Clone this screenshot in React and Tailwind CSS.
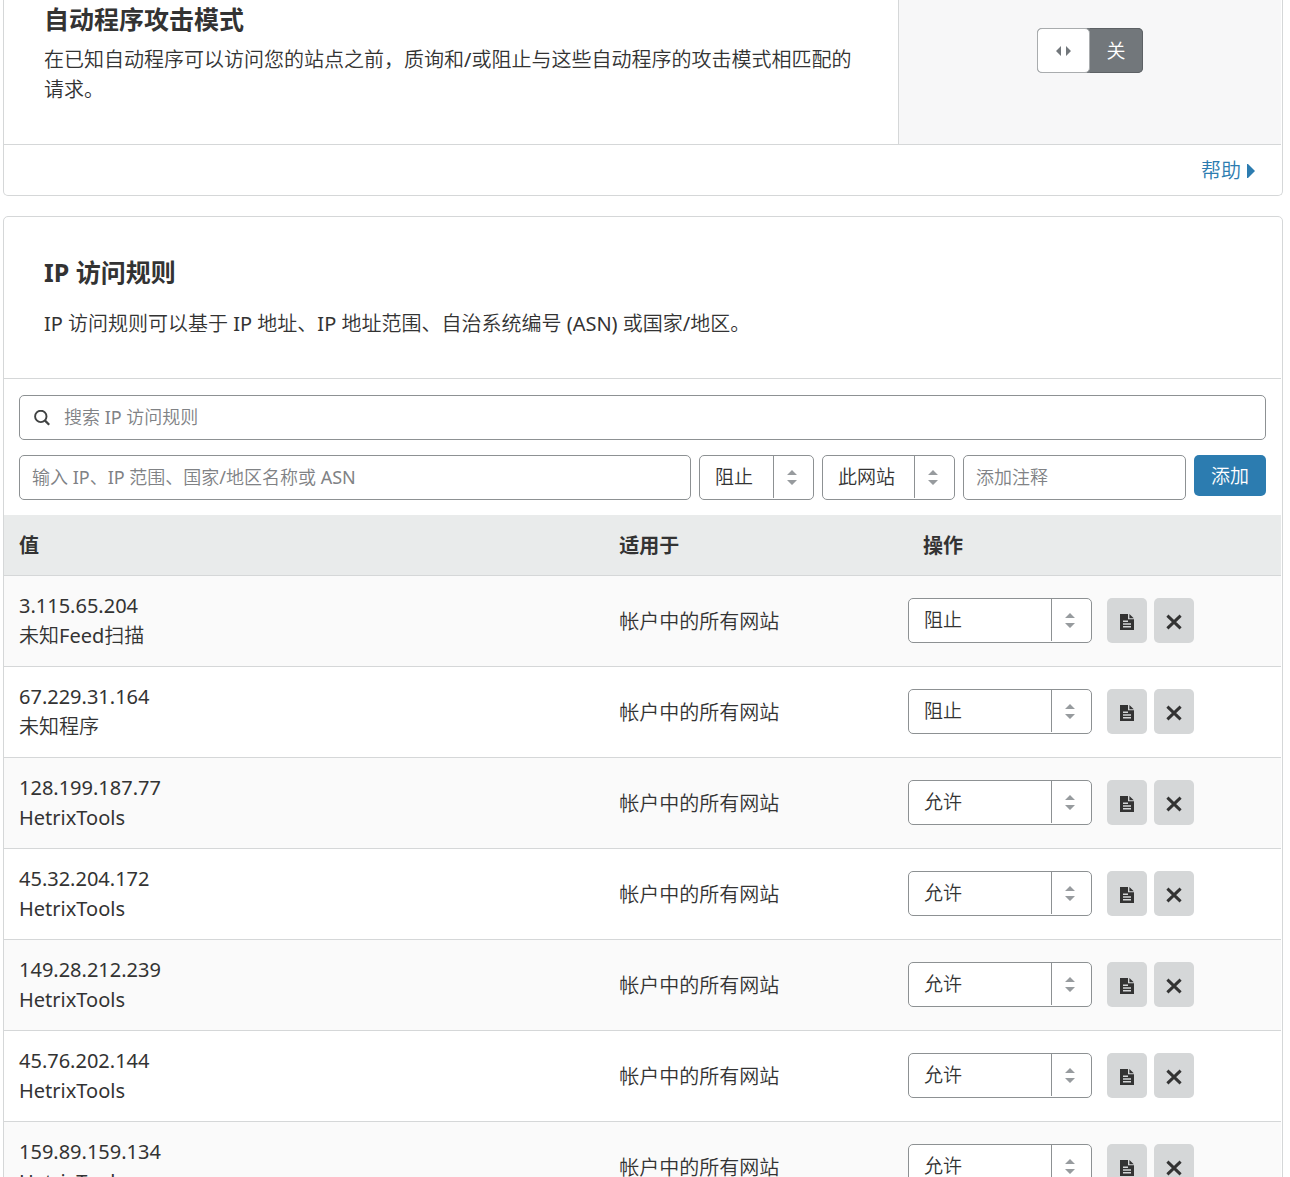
import { useState } from 'react';

const actions = ['阻止', '允许', '质询', 'JavaScript 质询'];
const scopes = ['此网站', '所有网站'];

const initialRules = [
  { ip: '3.115.65.204', note: '未知Feed扫描', action: '阻止' },
  { ip: '67.229.31.164', note: '未知程序', action: '阻止' },
  { ip: '128.199.187.77', note: 'HetrixTools', action: '允许' },
  { ip: '45.32.204.172', note: 'HetrixTools', action: '允许' },
  { ip: '149.28.212.239', note: 'HetrixTools', action: '允许' },
  { ip: '45.76.202.144', note: 'HetrixTools', action: '允许' },
  { ip: '159.89.159.134', note: 'HetrixTools', action: '允许' },
];

function SearchIcon() {
  return (
    <svg className="ml-[14px] h-4 w-4 shrink-0" viewBox="0 0 16 16" fill="none" stroke="#404242" strokeWidth="1.9" aria-hidden="true">
      <circle cx="6.8" cy="6.4" r="5.7" />
      <path d="M10.8 10.4 15.2 14.8" strokeWidth="2.2" />
    </svg>
  );
}

function NoteIcon() {
  return (
    <svg className="h-4 w-[14px]" viewBox="0 0 14 16" aria-hidden="true">
      <path fill="#333" fillRule="evenodd" d="M0 0h8v5.2h6V16H0zM3 6.4v1.5h5V6.4zM3 9.2v1.5h8V9.2zM3 12v1.5h8V12z" />
      <path fill="#333" d="M9.4 0 13.8 4.2H9.4z" />
    </svg>
  );
}

function CloseIcon() {
  return (
    <svg className="h-4 w-4" viewBox="0 0 16 16" stroke="#333" strokeWidth="3" aria-hidden="true">
      <path d="M1.4 1.6 14.6 14.4M14.6 1.6 1.4 14.4" />
    </svg>
  );
}

function Select({ label, options, className, ...props }) {
  return (
    <div className={`relative h-[45px] ${className}`}>
      <select
        aria-label={label}
        className="h-full w-full appearance-none rounded-[5px] border border-[#8d9193] bg-white pr-10 pl-[15px] text-[19px]"
        {...props}
      >
        {options.map((option) => (
          <option key={option}>{option}</option>
        ))}
      </select>
      <span className="pointer-events-none absolute top-px right-0 bottom-[2px] flex w-[41px] items-center justify-center border-l border-[#8d9193] pr-1">
        <svg className="h-[15px] w-[10px]" viewBox="0 0 10 15" fill="#979b9e" aria-hidden="true">
          <path d="M5 0 10 5H0zM5 15 0 10h10z" />
        </svg>
      </span>
    </div>
  );
}

function BotFightCard() {
  const [on, setOn] = useState(false);

  return (
    <section className="rounded-b-[5px] border border-t-0 border-[#d5d7d8] pr-px">
      <div className="flex border-b border-[#d5d7d8]">
        <div className="flex-1 px-10 pt-[3px] pb-[39px]">
          <h2 className="mb-[10px] font-['Noto_Sans','Noto_Sans_CJK_SC',sans-serif] text-[25px] leading-8 font-bold">
            自动程序攻击模式
          </h2>
          <p className="leading-[30px]">
            在已知自动程序可以访问您的站点之前，质询和/或阻止与这些自动程序的攻击模式相匹配的请求。
          </p>
        </div>
        <div className="flex w-[30%] items-start justify-center border-l border-[#d5d7d8] bg-[#f7f7f8] pt-7">
          <button
            type="button"
            role="switch"
            aria-checked={on}
            aria-label="自动程序攻击模式"
            onClick={() => setOn(!on)}
            className="flex h-[45px] w-[106px] rounded-[5px] bg-[#72777b] text-[19px] text-white"
          >
            <span className="flex h-full w-[53px] items-center justify-center rounded-[5px] border border-[#a9acae] bg-white">
              <svg className="h-[10px] w-[15px]" viewBox="0 0 15 10" fill="#72777b" aria-hidden="true">
                <path d="M0 5 5 0v10zM15 5 10 0v10z" />
              </svg>
            </span>
            <span className="flex h-full flex-1 items-center justify-center rounded-r-[5px] border border-l-0 border-[#5d6165] pt-[2px]">
              {on ? '开' : '关'}
            </span>
          </button>
        </div>
      </div>
      <div className="flex h-[50px] items-center justify-end pt-[2px] pr-[26px]">
        <a href="#help" className="flex items-center gap-[6px] text-[#2c7cb0]">
          帮助
          <svg className="h-[14px] w-2" viewBox="0 0 8 14" fill="#2c7cb0" aria-hidden="true">
            <path d="M0 0h1L8 7 1 14H0z" />
          </svg>
        </a>
      </div>
    </section>
  );
}

function AccessRulesCard() {
  const [rules, setRules] = useState(initialRules);

  const changeAction = (ip, action) => {
    setRules(rules.map((rule) => (rule.ip === ip ? { ...rule, action } : rule)));
  };

  const removeRule = (ip) => {
    setRules(rules.filter((rule) => rule.ip !== ip));
  };

  return (
    <section className="rounded-[5px] border border-[#d5d7d8] pr-px">
      <div className="border-b border-[#d5d7d8] px-10 py-[39px]">
        <h2 className="mb-[21px] font-['Noto_Sans','Noto_Sans_CJK_SC',sans-serif] text-[25px] leading-8 font-bold">
          IP 访问规则
        </h2>
        <p className="leading-[30px]">IP 访问规则可以基于 IP 地址、IP 地址范围、自治系统编号 (ASN) 或国家/地区。</p>
      </div>

      <div className="flex flex-col gap-[15px] px-[15px] pt-4 pb-[15px]">
        <label className="flex h-[45px] items-center rounded-[5px] border border-[#8d9193]">
          <SearchIcon />
          <input
            type="search"
            aria-label="搜索 IP 访问规则"
            placeholder="搜索 IP 访问规则"
            className="h-full flex-1 bg-transparent px-[14px] pb-[2px] text-[18px] outline-none placeholder:text-[#808285]"
          />
        </label>
        <form className="flex items-start gap-2" onSubmit={(e) => e.preventDefault()}>
          <input
            type="text"
            aria-label="IP、IP 范围、国家/地区名称或 ASN"
            placeholder="输入 IP、IP 范围、国家/地区名称或 ASN"
            className="h-[45px] min-w-0 flex-1 rounded-[5px] border border-[#8d9193] px-3 pb-[2px] text-[18px] placeholder:text-[#808285]"
          />
          <Select label="操作" options={actions.slice(0, 3)} className="w-[115px]" />
          <Select label="适用于" options={scopes} className="w-[133px]" />
          <input
            type="text"
            aria-label="添加注释"
            placeholder="添加注释"
            className="h-[45px] w-[223px] rounded-[5px] border border-[#8d9193] px-3 pb-[2px] text-[18px] placeholder:text-[#808285]"
          />
          <button type="submit" className="h-[41px] w-[72px] rounded-[5px] bg-[#2c7cb0] pt-[2px] text-[19px] text-white">
            添加
          </button>
        </form>
      </div>

      <table className="w-full table-fixed text-left">
        <thead className="font-['Noto_Sans','Noto_Sans_CJK_SC',sans-serif]">
          <tr className="h-[60px] border-b border-[#d5d7d8] bg-[#e9ebeb]">
            <th className="w-[47%] px-[15px] pt-[2px] font-bold">值</th>
            <th className="px-[15px] pt-[2px] font-bold">适用于</th>
            <th className="w-[373px] px-[15px] pt-[2px] font-bold">操作</th>
          </tr>
        </thead>
        <tbody>
          {rules.map((rule) => (
            <tr key={rule.ip} className="h-[91px] border-b border-[#d5d7d8] odd:bg-[#fafafa]">
              <td className="px-[15px] leading-[30px]">
                <div>{rule.ip}</div>
                <div>{rule.note}</div>
              </td>
              <td className="px-[15px] pt-[2px] leading-[30px]">帐户中的所有网站</td>
              <td>
                <div className="flex">
                  <Select
                    label={`${rule.ip} 操作`}
                    options={actions}
                    value={rule.action}
                    onChange={(e) => changeAction(rule.ip, e.target.value)}
                    className="w-[184px]"
                  />
                  <button
                    type="button"
                    aria-label="编辑注释"
                    className="ml-[15px] flex h-[45px] w-10 items-center justify-center rounded-[5px] bg-[#d5d7d8] pt-[2px]"
                  >
                    <NoteIcon />
                  </button>
                  <button
                    type="button"
                    aria-label="删除"
                    onClick={() => removeRule(rule.ip)}
                    className="ml-[7px] flex h-[45px] w-10 items-center justify-center rounded-[5px] bg-[#d5d7d8] pt-[2px]"
                  >
                    <CloseIcon />
                  </button>
                </div>
              </td>
            </tr>
          ))}
        </tbody>
      </table>
    </section>
  );
}

export default function App() {
  return (
    <main className="flex flex-col gap-5 bg-white pr-[7px] pl-[3px] font-['Noto_Sans','Noto_Sans_CJK_SC_DemiLight','Noto_Sans_CJK_SC',sans-serif] text-[20px] text-[#333]">
      <BotFightCard />
      <AccessRulesCard />
    </main>
  );
}
